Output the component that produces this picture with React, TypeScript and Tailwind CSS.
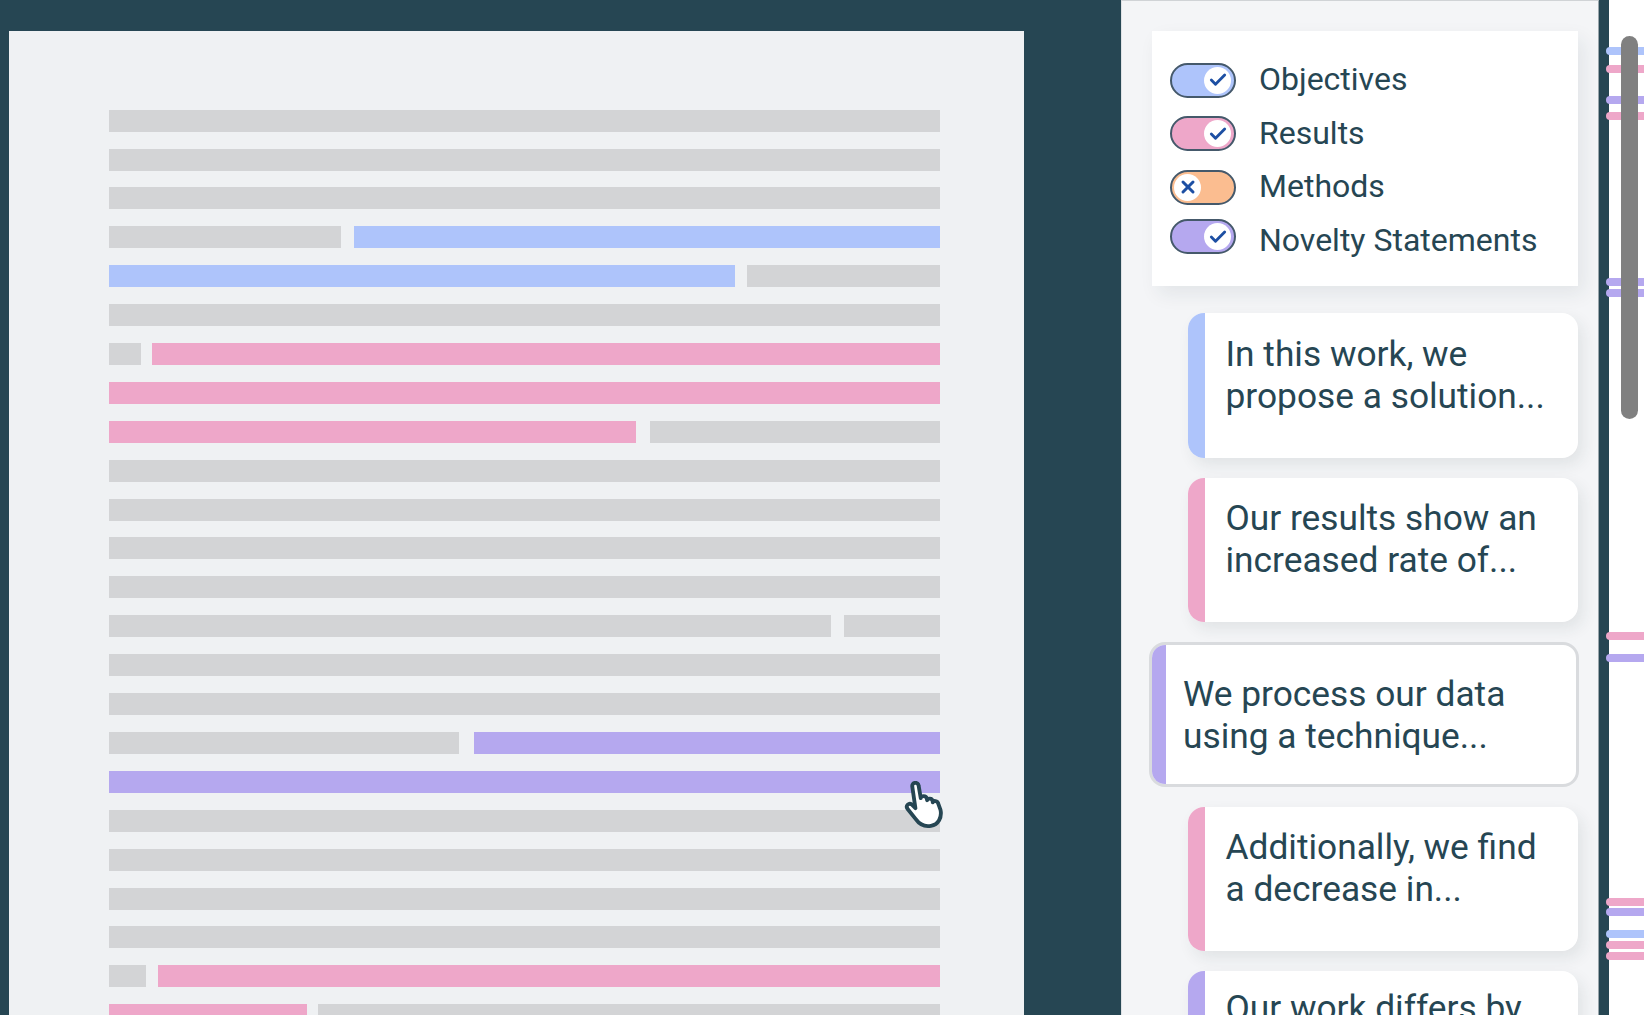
import { Check, X } from "lucide-react";

const Seg = ({ className }: { className: string }) => <div className={`h-full ${className}`} />;
const gray = "bg-[#d3d4d6]";

const Row = ({ children }: { children?: React.ReactNode }) => (
  <div className="flex h-[22px] shrink-0 justify-between">
    {children ?? <Seg className={`w-full ${gray}`} />}
  </div>
);

function Toggle({ color, on, lift }: { color: string; on: boolean; lift?: boolean }) {
  return (
    <div
      className={`flex h-[35px] w-[66px] shrink-0 items-center rounded-full border-2 border-[#45596b] ${color} ${on ? "justify-end px-[3px]" : "justify-start px-[2px]"} ${lift ? "-translate-y-[3px]" : "translate-y-[1px]"}`}
    >
      <div className="flex h-[27px] w-[27px] items-center justify-center rounded-full bg-white">
        {on ? (
          <Check size={20} strokeWidth={3.4} className="text-[#1d4fa3]" />
        ) : (
          <X size={20} strokeWidth={3.6} className="text-[#1d4fa3]" />
        )}
      </div>
    </div>
  );
}

function LegendRow({ color, on, label, lift }: { color: string; on: boolean; label: string; lift?: boolean }) {
  return (
    <div className="flex h-[53.6px] items-center gap-[23px]">
      <Toggle color={color} on={on} lift={lift} />
      <span className="text-[32px] leading-none text-[#264653]">{label}</span>
    </div>
  );
}

function Card({ stripe, lines, pad }: { stripe: string; lines: string[]; pad: string }) {
  return (
    <div className="ml-[36px] flex h-[144.5px] shrink-0 overflow-hidden rounded-[16px] bg-white shadow-[5px_7px_16px_rgba(30,50,60,0.09)]">
      <div className={`w-[16.5px] shrink-0 ${stripe}`} />
      <div className={`pl-[21px] text-[35.3px] leading-[42px] text-[#264653] ${pad}`}>
        {lines.map((l) => (
          <div key={l}>{l}</div>
        ))}
      </div>
    </div>
  );
}

const marks = [
  ["top-[47px]", "bg-[#aec4fb]"],
  ["top-[65px]", "bg-[#eea7c9]"],
  ["top-[96px]", "bg-[#b5a8ef]"],
  ["top-[112px]", "bg-[#eea7c9]"],
  ["top-[278px]", "bg-[#b5a8ef]"],
  ["top-[289px]", "bg-[#b5a8ef]"],
  ["top-[632px]", "bg-[#eea7c9]"],
  ["top-[654px]", "bg-[#b5a8ef]"],
  ["top-[898px]", "bg-[#eea7c9]"],
  ["top-[908px]", "bg-[#b5a8ef]"],
  ["top-[930px]", "bg-[#aec4fb]"],
  ["top-[941px]", "bg-[#eea7c9]"],
  ["top-[952px]", "bg-[#eea7c9]"],
];

export default function App() {
  return (
    <div className="relative flex h-[1015px] w-[1644px] overflow-hidden bg-[#264653] font-['Roboto',sans-serif]">
      <div className="shrink-0 pl-[9px] pt-[31px]">
        <div className="relative flex h-[1100px] w-[1015px] flex-col gap-[16.9px] bg-[#eff1f3] pl-[100px] pr-[84px] pt-[78.7px]">
          <Row />
          <Row />
          <Row />
          <Row>
            <Seg className={`w-[232px] ${gray}`} />
            <Seg className="w-[586px] bg-[#aec4fb]" />
          </Row>
          <Row>
            <Seg className="w-[626px] bg-[#aec4fb]" />
            <Seg className={`w-[193px] ${gray}`} />
          </Row>
          <Row />
          <Row>
            <Seg className={`w-[32px] ${gray}`} />
            <Seg className="w-[788px] bg-[#eea7c9]" />
          </Row>
          <Row>
            <Seg className="w-full bg-[#eea7c9]" />
          </Row>
          <Row>
            <Seg className="w-[527px] bg-[#eea7c9]" />
            <Seg className={`w-[290px] ${gray}`} />
          </Row>
          <Row />
          <Row />
          <Row />
          <Row />
          <Row>
            <Seg className={`w-[722px] ${gray}`} />
            <Seg className={`w-[96px] ${gray}`} />
          </Row>
          <Row />
          <Row />
          <Row>
            <Seg className={`w-[350px] ${gray}`} />
            <Seg className="w-[466px] bg-[#b5a8ef]" />
          </Row>
          <Row>
            <Seg className="w-full bg-[#b5a8ef]" />
          </Row>
          <Row />
          <Row />
          <Row />
          <Row />
          <Row>
            <Seg className={`w-[37px] ${gray}`} />
            <Seg className="w-[782px] bg-[#eea7c9]" />
          </Row>
          <Row>
            <Seg className="w-[198px] bg-[#eea7c9]" />
            <Seg className={`w-[622px] ${gray}`} />
          </Row>
          <svg
            viewBox="0 0 38 45"
            className="absolute left-[895px] top-[750px] h-[48px] w-[41px]"
            fill="#ffffff"
            stroke="#264653"
            strokeWidth="3.6"
            strokeLinejoin="round"
            strokeLinecap="round"
          >
            <path d="M7.5 5a3 3 0 0 1 6-.6L15.5 16c.3-2.5 5-2.5 5.5 0l.5 2c.3-2 4.6-2 5 .5l.3 1.500c.5-2 4.500-1.500 5 1L34 27c1.500 7-2 14-9 15-6 1-10.500-1-14-6L3 26c-2-3 1.500-6 4-4l3.500 3.500Z" />
          </svg>
        </div>
      </div>

      <div className="ml-[97px] flex h-[1015px] w-[478px] shrink-0 flex-col overflow-hidden border-x border-r-[#9aa5ab] border-l-[#dfe2e5] border-t border-t-[#d0d3d6] bg-[#f4f5f7] pl-[30px] pr-[20px] pt-[30px]">
        <div className="flex h-[255px] shrink-0 flex-col justify-center bg-white pl-[18px] pt-[2px] shadow-[6px_8px_18px_rgba(30,50,60,0.08)]">
          <LegendRow color="bg-[#aec4fb]" on label="Objectives" />
          <LegendRow color="bg-[#eea7c9]" on label="Results" />
          <LegendRow color="bg-[#fbbd90]" on={false} label="Methods" />
          <LegendRow color="bg-[#b5a8ef]" on label="Novelty Statements" lift />
        </div>
        <div className="mt-[27px] flex shrink-0 flex-col gap-[20px]">
          <Card stripe="bg-[#aec4fb]" lines={["In this work, we", "propose a solution..."]} pad="pt-[20px]" />
          <Card stripe="bg-[#eea7c9]" lines={["Our results show an", "increased rate of..."]} pad="pt-[19px]" />
          <div className="-ml-[3px] -mr-[1px] flex h-[144.5px] shrink-0 overflow-hidden rounded-[16px] border-[3px] border-[#d9dbde] bg-white">
            <div className="w-[14px] shrink-0 bg-[#b5a8ef]" />
            <div className="pl-[17px] pt-[28px] text-[35.3px] leading-[42px] text-[#264653]">
              <div>We process our data</div>
              <div>using a technique...</div>
            </div>
          </div>
          <Card stripe="bg-[#eea7c9]" lines={["Additionally, we find", "a decrease in..."]} pad="pt-[19px]" />
          <Card stripe="bg-[#b5a8ef]" lines={["Our work differs by"]} pad="pt-[16px]" />
        </div>
      </div>

      <div className="ml-[10px] flex-1 bg-white" />

      {marks.map(([top, color], i) => (
        <div key={i} className={`absolute left-[1606px] right-0 h-[8px] rounded-l-full ${top} ${color}`} />
      ))}
      <div className="absolute left-[1621px] top-[36px] h-[383px] w-[17px] rounded-full bg-[#808080]" />
    </div>
  );
}
